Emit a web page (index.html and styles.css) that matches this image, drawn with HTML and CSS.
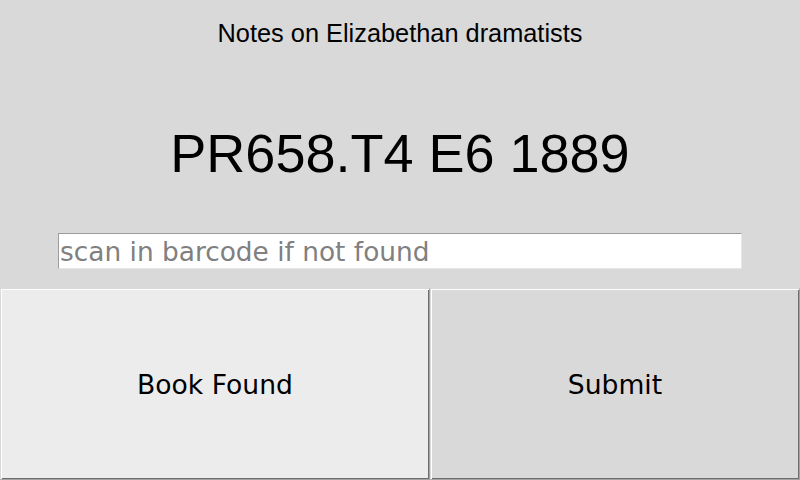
FILE: index.html
```html
<!DOCTYPE html>
<html>
<head>
<meta charset="utf-8">
<link rel="stylesheet" href="styles.css">
</head>
<body>
<div class="app">
  <div class="title">Notes on Elizabethan dramatists</div>
  <div class="callno">PR658.T4 E6 1889</div>
  <div class="entry-row">
    <input class="entry" type="text" placeholder="scan in barcode if not found">
  </div>
  <div class="buttons">
    <button class="btn btn-found">Book Found</button>
    <button class="btn btn-submit">Submit</button>
  </div>
</div>
</body>
</html>
```

FILE: styles.css
```css
html, body {
  margin: 0;
  padding: 0;
  background: #d9d9d9;
}

.app {
  width: 800px;
  height: 480px;
  display: flex;
  flex-direction: column;
  background: #d9d9d9;
  overflow: hidden;
}

.title {
  margin-top: 18px;
  height: 30px;
  line-height: 30px;
  text-align: center;
  font-family: "Liberation Sans", Arial, sans-serif;
  font-size: 25.35px;
  color: #000;
}

.callno {
  margin-top: 73px;
  height: 64px;
  line-height: 64px;
  text-align: center;
  font-family: "Liberation Sans", Arial, sans-serif;
  font-size: 54px;
  color: #000;
}

.entry-row {
  margin-top: 48px;
  height: 36px;
  display: flex;
  justify-content: center;
}

.entry {
  box-sizing: border-box;
  width: 684px;
  height: 36px;
  margin: 0;
  padding: 0 0 0 1px;
  border: 1px solid;
  border-color: #9c9c9c #e6e6e6 #e6e6e6 #9c9c9c;
  background: #fff;
  font-family: "DejaVu Sans", sans-serif;
  font-size: 26.4px;
  color: #000;
  outline: none;
}

.entry::placeholder {
  color: #808080;
  opacity: 1;
}

.buttons {
  margin-top: 19px;
  height: 192px;
  display: flex;
}

.btn {
  box-sizing: border-box;
  height: 192px;
  margin: 0;
  padding: 0;
  border: 1px solid;
  border-color: #d9d9d9 #a3a3a3 #a3a3a3 #d9d9d9;
  box-shadow: inset 1px 1px 0 #ffffff, inset -1px -1px 0 #6e6e6e;
  font-family: "DejaVu Sans", sans-serif;
  font-size: 26.6px;
  color: #000;
  text-align: center;
}

.btn-found {
  width: 430px;
  background: #ececec;
}

.btn-submit {
  width: 370px;
  background: #d9d9d9;
}
```
